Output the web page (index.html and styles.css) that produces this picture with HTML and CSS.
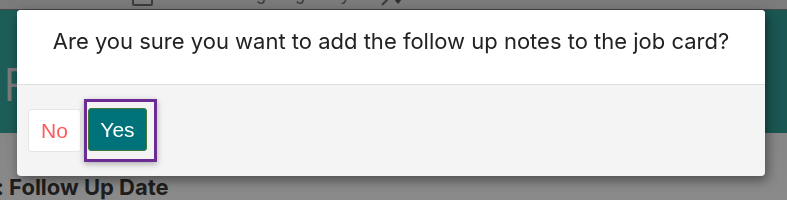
FILE: index.html
```html
<!DOCTYPE html>
<html lang="en">
<head>
  <meta charset="UTF-8">
  <meta name="viewport" content="width=device-width, initial-scale=1.0">
  <title>Follow Up Notes</title>
  <link rel="stylesheet" href="styles.css">
</head>
<body>
<div class="page">
    <div class="toolbar">
        <span class="tool-icon"></span>
        <span class="tool-text">Change log entry</span>
        <svg class="tool-pen" width="24" height="10" viewBox="0 0 24 10">
            <path d="M2 6 L8 0" stroke="#3a3a3a" stroke-width="2" fill="none"/>
            <path d="M14 0 L18 5 L22 0 Z" fill="#2e2e2e"/>
        </svg>
    </div>
    <div class="banner">
        <h1 class="banner-title">Follow Up</h1>
    </div>
    <div class="section">
        <p class="section-label">Next: Follow Up Date</p>
    </div>
</div>

<!-- Confirm dialog -->
<div class="modal">
    <div class="modal-body">
        <p>Are you sure you want to add the follow up notes to the job card?</p>
    </div>
    <div class="modal-footer">
        <button type="button" class="btn btn-no">No</button>
        <span class="focus-ring">
            <button type="button" class="btn btn-yes">Yes</button>
        </span>
    </div>
</div>
</body>
</html>
```

FILE: styles.css
```css
body {
    font-family: 'Liberation Sans', Arial, sans-serif;
    margin: 0;
    padding: 0;
    overflow: hidden;
    background: #868686;
  }

  .page {
    width: 787px;
    height: 200px;
    background: linear-gradient(180deg, #7e7e7e 0%, #8a8a8a 100%);
  }

  .toolbar {
    height: 9px;
    background: #7b7b7b;
    border-bottom: 1px solid #454545;
    display: flex;
    align-items: flex-end;
    overflow: hidden;
  }

  .tool-icon {
    width: 17px;
    height: 12px;
    margin-left: 132px;
    border: 2px solid #3c3c3c;
    border-radius: 2px;
    margin-bottom: 3px;
    flex: none;
  }

  .tool-text {
    margin-left: 60px;
    font-size: 18px;
    line-height: 18px;
    color: #3c3c3c;
    margin-bottom: 6px;
    flex: none;
  }

  .tool-pen {
    margin-left: 30px;
    flex: none;
  }

  .banner {
    height: 123px;
    background: linear-gradient(90deg, #1d5d58 0%, #1a5752 100%);
    overflow: hidden;
  }

  .banner-title {
    margin: 0;
    padding: 48px 0 0 3px;
    font-family: 'Open Sans', sans-serif;
    font-weight: 400;
    font-size: 46px;
    line-height: 50px;
    color: #7b7b7b;
  }

  .section {
    padding-top: 42px;
  }

  .section-label {
    margin: 0 0 0 -54px;
    font-family: 'Inter', sans-serif;
    font-weight: 700;
    font-size: 22px;
    line-height: 24px;
    color: #1e1e1e;
    white-space: nowrap;
  }

  .modal {
    position: fixed;
    left: 17px;
    top: 10px;
    width: 748px;
    height: 166px;
    background: #f4f4f4;
    border-radius: 4px;
    box-shadow: 2px 4px 12px rgba(0, 0, 0, 0.45);
    display: flex;
    flex-direction: column;
  }

  .modal-body {
    height: 74px;
    background: #ffffff;
    border-bottom: 1px solid #dedede;
    border-top-left-radius: 4px;
    border-top-right-radius: 4px;
    text-align: center;
  }

  .modal-body p {
    margin: 0;
    padding-top: 18px;
    font-family: 'Inter', sans-serif;
    font-size: 22px;
    line-height: 26px;
    color: #222222;
    white-space: nowrap;
  }

  .modal-footer {
    display: flex;
    align-items: flex-start;
    padding: 14px 0 0 11px;
  }

  .btn {
    font-family: 'Liberation Sans', Arial, sans-serif;
    font-size: 21px;
    height: 43px;
    border-radius: 3px;
    padding: 0;
    cursor: pointer;
  }

  .btn-no {
    width: 53px;
    margin-top: 10px;
    background: #ffffff;
    color: #ff5a5a;
    border: 1px solid #e6e6e6;
  }

  .focus-ring {
    display: inline-block;
    margin-left: 3px;
    padding: 6px 7px 8px 1px;
    border: 3px solid #6b2c93;
    box-shadow: 0 2px 6px rgba(0, 0, 0, 0.3);
  }

  .btn-yes {
    display: block;
    width: 59px;
    background: #00737a;
    color: #ffffff;
    border: 1px solid #3f7a3c;
  }
```
